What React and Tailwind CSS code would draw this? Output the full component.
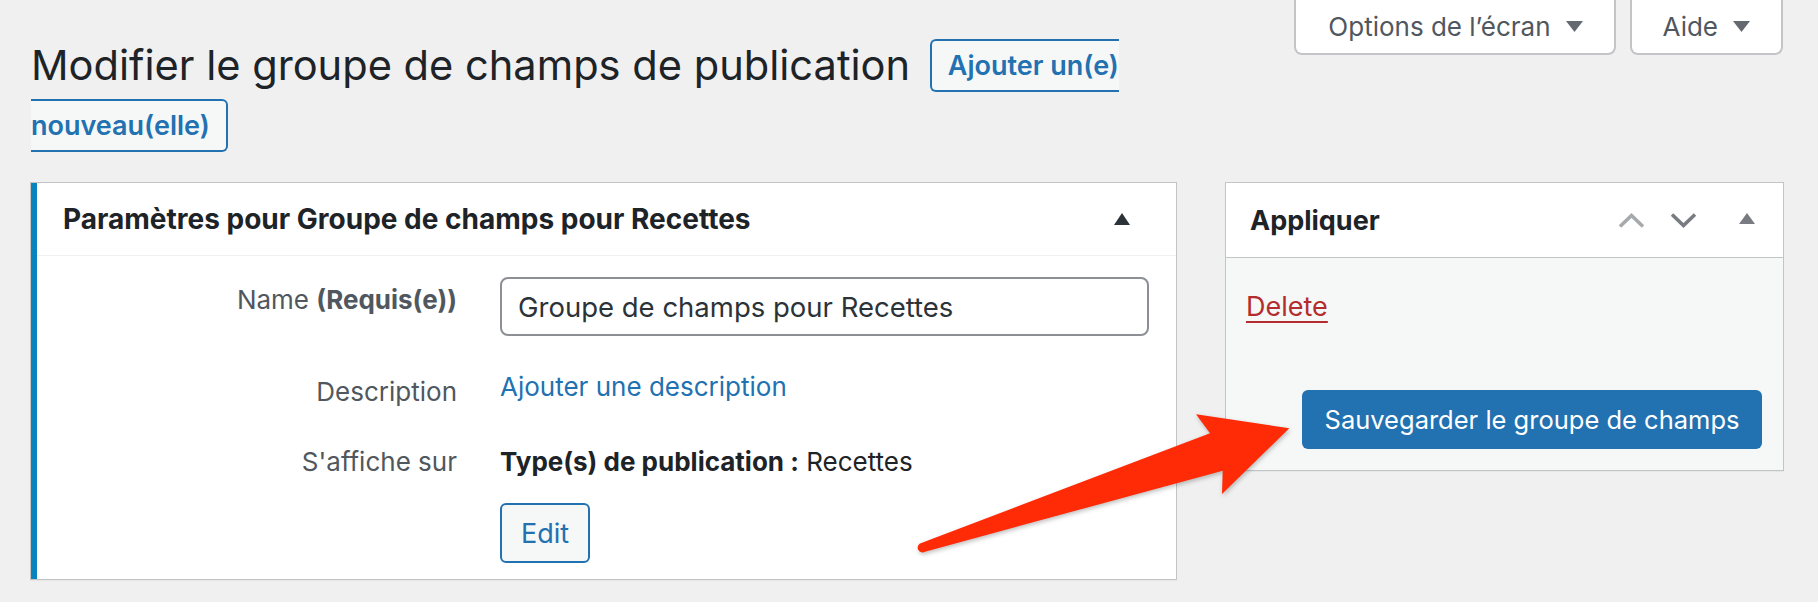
import React from 'react';

const TriangleDown = ({ className }) => (
  <svg width="17" height="11" viewBox="0 0 17 11" className={className}>
    <polygon points="0,0 17,0 8.5,11" fill="currentColor" />
  </svg>
);

const TriangleUp = ({ className, w = 16, h = 12 }) => (
  <svg width={w} height={h} viewBox={`0 0 ${w} ${h}`} className={className}>
    <polygon points={`0,${h} ${w},${h} ${w / 2},0`} fill="currentColor" />
  </svg>
);

const Chevron = ({ up, className }) => (
  <svg width="27" height="15" viewBox="0 0 27 15" className={className}>
    <polyline
      points={up ? '2,13.5 13.5,2.5 25,13.5' : '2,1.5 13.5,12.5 25,1.5'}
      fill="none"
      stroke="currentColor"
      strokeWidth="3.6"
    />
  </svg>
);

const ScreenTab = ({ label, className }) => (
  <button
    className={`h-[55px] flex items-center gap-[15px] bg-white border-2 border-t-0 border-[#c3c4c7] rounded-b-[8px] text-[26px] leading-none text-[#50575e] ${className}`}
  >
    {label}
    <TriangleDown className="text-[#646970]" />
  </button>
);

export default function App() {
  return (
    <div className="relative w-full h-[602px] overflow-hidden bg-[#f0f0f1] font-['Inter','Noto_Sans',sans-serif]">
      {/* title + screen tabs */}
      <div className="flex items-start justify-between">
        <div className="ml-[31px] mt-[35px] w-[1180px]">
          <h1 className="text-[41.6px] leading-[60px] font-normal text-[#1d2327]">
            Modifier le groupe de champs de publication{' '}
            <a
              href="#"
              className="ml-[8px] align-[5px] text-[27px] leading-none font-semibold text-[#2271b1] bg-[#f6f7f7] border-2 border-[#2271b1] rounded-[6px] px-[16px] py-[8px]"
            >
              Ajouter un(e) nouveau(elle)
            </a>
          </h1>
        </div>
        <div className="mr-[35px] flex gap-[14px]">
          <ScreenTab label="Options de l’écran" className="pl-[32px] pr-[31px]" />
          <ScreenTab label="Aide" className="pl-[31px] pr-[31px]" />
        </div>
      </div>

      {/* panels */}
      <div className="mt-[27px] pl-[30px] flex items-start gap-[48px]">
        <div className="w-[1147px] bg-white border border-[#c3c4c7] shadow-[0_1px_1px_rgba(0,0,0,0.04)]">
          <div className="border-l-[6px] border-[#0783be]">
            <div className="h-[73px] flex items-center justify-between pl-[26px] pr-[46px] border-b border-[#f0f0f1]">
              <h2 className="text-[28px] font-bold leading-none text-[#1d2327]">
                Paramètres pour Groupe de champs pour Recettes
              </h2>
              <TriangleUp className="text-[#2c3338]" />
            </div>

            <div className="pt-[21px] pb-[16px] text-[26px]">
              <div className="flex">
                <div className="w-[420px] pt-[3px] text-right leading-[40px] text-[#50575e]">
                  Name <span className="font-bold">(Requis(e))</span>
                </div>
                <input
                  type="text"
                  readOnly
                  defaultValue="Groupe de champs pour Recettes"
                  className="ml-[43px] w-[649px] h-[59px] border-2 border-[#8c8f94] rounded-[8px] px-[16px] text-[27.5px] text-[#2c3338] bg-white outline-none"
                />
              </div>

              <div className="flex pt-[31px]">
                <div className="w-[420px] pt-[5px] text-right leading-[40px] text-[#50575e]">
                  Description
                </div>
                <a href="#" className="ml-[43px] leading-[40px] text-[#2271b1]">
                  Ajouter une description
                </a>
              </div>

              <div className="flex pt-[30px]">
                <div className="w-[420px] text-right leading-[40px] text-[#50575e]">
                  S'affiche sur
                </div>
                <div className="ml-[43px] flex flex-col items-start">
                  <p className="leading-[40px] text-[#1d2327]">
                    <span className="font-bold">Type(s) de publication :</span> Recettes
                  </p>
                  <button className="mt-[21px] h-[60px] px-[19px] flex items-center bg-[#f6f7f7] border-2 border-[#2271b1] rounded-[6px] text-[27px] leading-none text-[#2271b1]">
                    Edit
                  </button>
                </div>
              </div>
            </div>
          </div>
        </div>

        <div className="w-[559px] bg-[#f6f7f7] border border-[#c3c4c7] shadow-[0_1px_1px_rgba(0,0,0,0.04)]">
          <div className="h-[75px] flex items-center bg-white pl-[24px] pr-[28px] border-b border-[#c3c4c7]">
            <h2 className="flex-1 text-[27px] font-bold leading-none text-[#1d2327]">Appliquer</h2>
            <Chevron up className="text-[#a7aaad]" />
            <Chevron className="ml-[25px] text-[#787c82]" />
            <TriangleUp className="ml-[42px] -mt-[3px] text-[#787c82]" h={11} />
          </div>
          <div className="flex flex-col pt-[29px] pb-[21px] pl-[20px] pr-[21px]">
            <a
              href="#"
              className="self-start text-[27px] leading-[40px] text-[#b32d2e] underline decoration-2 underline-offset-[5px]"
            >
              Delete
            </a>
            <button className="self-end mt-[63px] w-[460px] h-[59px] rounded-[6px] bg-[#2271b1] text-white text-[25.5px] leading-none">
              Sauvegarder le groupe de champs
            </button>
          </div>
        </div>
      </div>

      {/* callout arrow */}
      <svg
        className="absolute inset-0 pointer-events-none drop-shadow-[1px_2px_2px_rgba(0,0,0,0.25)]"
        width="1818"
        height="602"
        viewBox="0 0 1818 602"
      >
        <path
          d="M920 543.5 L1210 433.3 L1196 414.3 L1289.3 428.3 L1222 494 L1222.7 470.7 L925 551.7 A4.8 4.8 0 0 1 920 543.5 Z"
          fill="#ff2a06"
        />
      </svg>
    </div>
  );
}
